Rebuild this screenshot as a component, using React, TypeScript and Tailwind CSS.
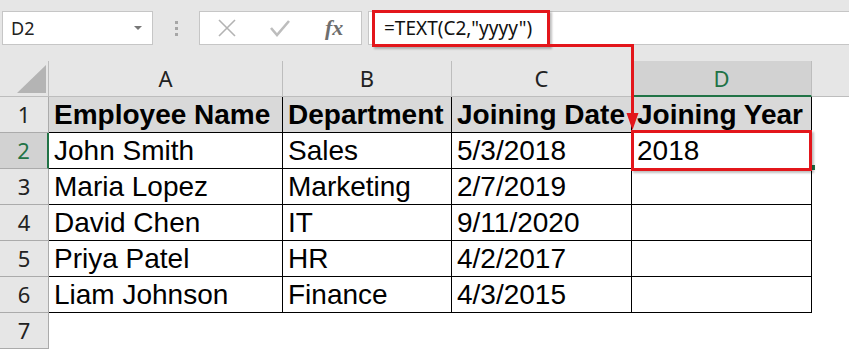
const rows = [
    ["John Smith", "Sales", "5/3/2018", "2018"],
    ["Maria Lopez", "Marketing", "2/7/2019", ""],
    ["David Chen", "IT", "9/11/2020", ""],
    ["Priya Patel", "HR", "4/2/2017", ""],
    ["Liam Johnson", "Finance", "4/3/2015", ""],
];

const headers = ["Employee Name", "Department", "Joining Date", "Joining Year"];
const ui = { fontFamily: '"Noto Sans", "Open Sans", sans-serif' };
const cellFont = { fontFamily: '"Liberation Sans", Arial, sans-serif' };

function FormulaBar() {
    return (
        <div className="h-[61px] bg-[#e6e6e6] flex items-start pt-[11px] pl-[2px]" style={ui}>
            <div className="w-[151px] h-[34px] bg-white border border-[#c6c6c6] flex items-center justify-between pl-[8px] pr-[10px]">
                <span className="text-[18px] text-[#222]">D2</span>
                <span className="w-0 h-0 border-l-[4px] border-r-[4px] border-t-[4px] border-l-transparent border-r-transparent border-t-[#777]" />
            </div>
            <div className="w-[46px] h-[34px] flex flex-col items-center justify-center gap-[3px]">
                <span className="w-[3px] h-[3px] bg-[#a6a6a6]" />
                <span className="w-[3px] h-[3px] bg-[#a6a6a6]" />
                <span className="w-[3px] h-[3px] bg-[#a6a6a6]" />
            </div>
            <div className="w-[163px] h-[34px] bg-white border border-[#c6c6c6] flex items-center">
                <svg width="20" height="20" viewBox="0 0 20 20" className="ml-[17px]">
                    <path d="M2 2 L18 18 M18 2 L2 18" stroke="#b3b3b3" strokeWidth="1.6" fill="none" />
                </svg>
                <svg width="22" height="20" viewBox="0 0 22 20" className="ml-[32px]">
                    <path d="M2 10 L8 17 L20 3" stroke="#bdbdbd" strokeWidth="2.6" fill="none" />
                </svg>
                <span className="ml-[34px] text-[22px] italic font-bold text-[#6e6e6e] leading-none" style={{ fontFamily: '"Liberation Serif", serif' }}>
                    fx
                </span>
            </div>
            <div className="ml-[6px] flex-1 h-[34px] bg-white border-y border-l border-[#c6c6c6] flex items-center pl-[15px]">
                <span className="text-[19px] text-[#111]">=TEXT(C2,"yyyy")</span>
            </div>
        </div>
    );
}

function Row({ n, cells }: { n: number; cells: string[] }) {
    const active = n === 2;
    return (
        <>
            <div
                className={
                    active
                        ? "bg-[#d2d2d2] border-b border-b-[#ababab] border-r-2 border-r-[#217346] flex items-center justify-center text-[22px] text-[#217346]"
                        : "bg-[#e6e6e6] border-b border-r border-[#ababab] flex items-center justify-center text-[22px] text-[#222]"
                }
                style={ui}
            >
                {n}
            </div>
            {cells.map((c, j) => (
                <div key={j} className="bg-white border-b border-r border-black flex items-center pl-[5px] text-[28px] text-black whitespace-nowrap overflow-hidden" style={cellFont}>
                    {c}
                </div>
            ))}
            <div className="bg-white" />
        </>
    );
}

function Sheet() {
    const letters = ["A", "B", "C", "D"];
    return (
        <div className="grid grid-cols-[49px_234px_169px_180px_180px_1fr] auto-rows-[36px]">
            {/* column headers */}
            <div className="bg-[#e6e6e6] border-b border-r border-[#bdbdbd] relative">
                <svg width="30" height="29" viewBox="0 0 30 29" className="absolute left-[17px] top-[4px]">
                    <polygon points="29,0 29,28 0,28" fill="#b4b4b4" />
                </svg>
            </div>
            {letters.map((l) => (
                <div
                    key={l}
                    className={
                        l === "D"
                            ? "bg-[#d2d2d2] border-b-2 border-b-[#217346] border-r border-r-[#bdbdbd] flex items-center justify-center text-[22px] text-[#217346]"
                            : "bg-[#e6e6e6] border-b border-r border-[#bdbdbd] flex items-center justify-center text-[22px] text-[#222]"
                    }
                    style={ui}
                >
                    {l}
                </div>
            ))}
            <div className="bg-[#e6e6e6] border-b border-[#bdbdbd]" />

            {/* header row */}
            <div className="bg-[#e6e6e6] border-b border-r border-[#ababab] flex items-center justify-center text-[22px] text-[#222]" style={ui}>
                1
            </div>
            {headers.map((h) => (
                <div key={h} className="bg-[#d9d9d9] border-b border-r border-black flex items-center pl-[5px] text-[28px] font-bold text-black whitespace-nowrap overflow-hidden" style={cellFont}>
                    {h}
                </div>
            ))}
            <div className="bg-white" />

            {rows.map((r, i) => (
                <Row key={i} n={i + 2} cells={r} />
            ))}

            <div className="bg-[#e6e6e6] border-b border-r border-[#ababab] flex items-center justify-center text-[22px] text-[#222]" style={ui}>
                7
            </div>
            <div className="col-span-5 bg-white" />
        </div>
    );
}

export default function App() {
    return (
        <div className="relative w-[849px] h-[350px] overflow-hidden bg-white">
            <FormulaBar />
            <Sheet />

            {/* annotations */}
            <div className="absolute left-[372px] top-[10px] w-[178px] h-[37px] border-[3px] border-[#e3161b] shadow-[2px_2px_2px_rgba(0,0,0,0.25)] pointer-events-none" />
            <div className="absolute left-[810px] top-[165px] w-[5px] h-[5px] bg-[#217346]" />
            <div className="absolute left-[631px] top-[130px] w-[181px] h-[41px] border-[3px] border-[#e3161b] shadow-[2px_2px_2px_rgba(0,0,0,0.25)] pointer-events-none" />
            <svg className="absolute left-0 top-0 pointer-events-none" width="849" height="350">
                <path d="M549 45.5 L632.5 45.5 L632.5 116" stroke="#e3161b" strokeWidth="3" fill="none" />
                <polygon points="626.5,113 638.5,113 632.5,130" fill="#e3161b" />
            </svg>
        </div>
    );
}
